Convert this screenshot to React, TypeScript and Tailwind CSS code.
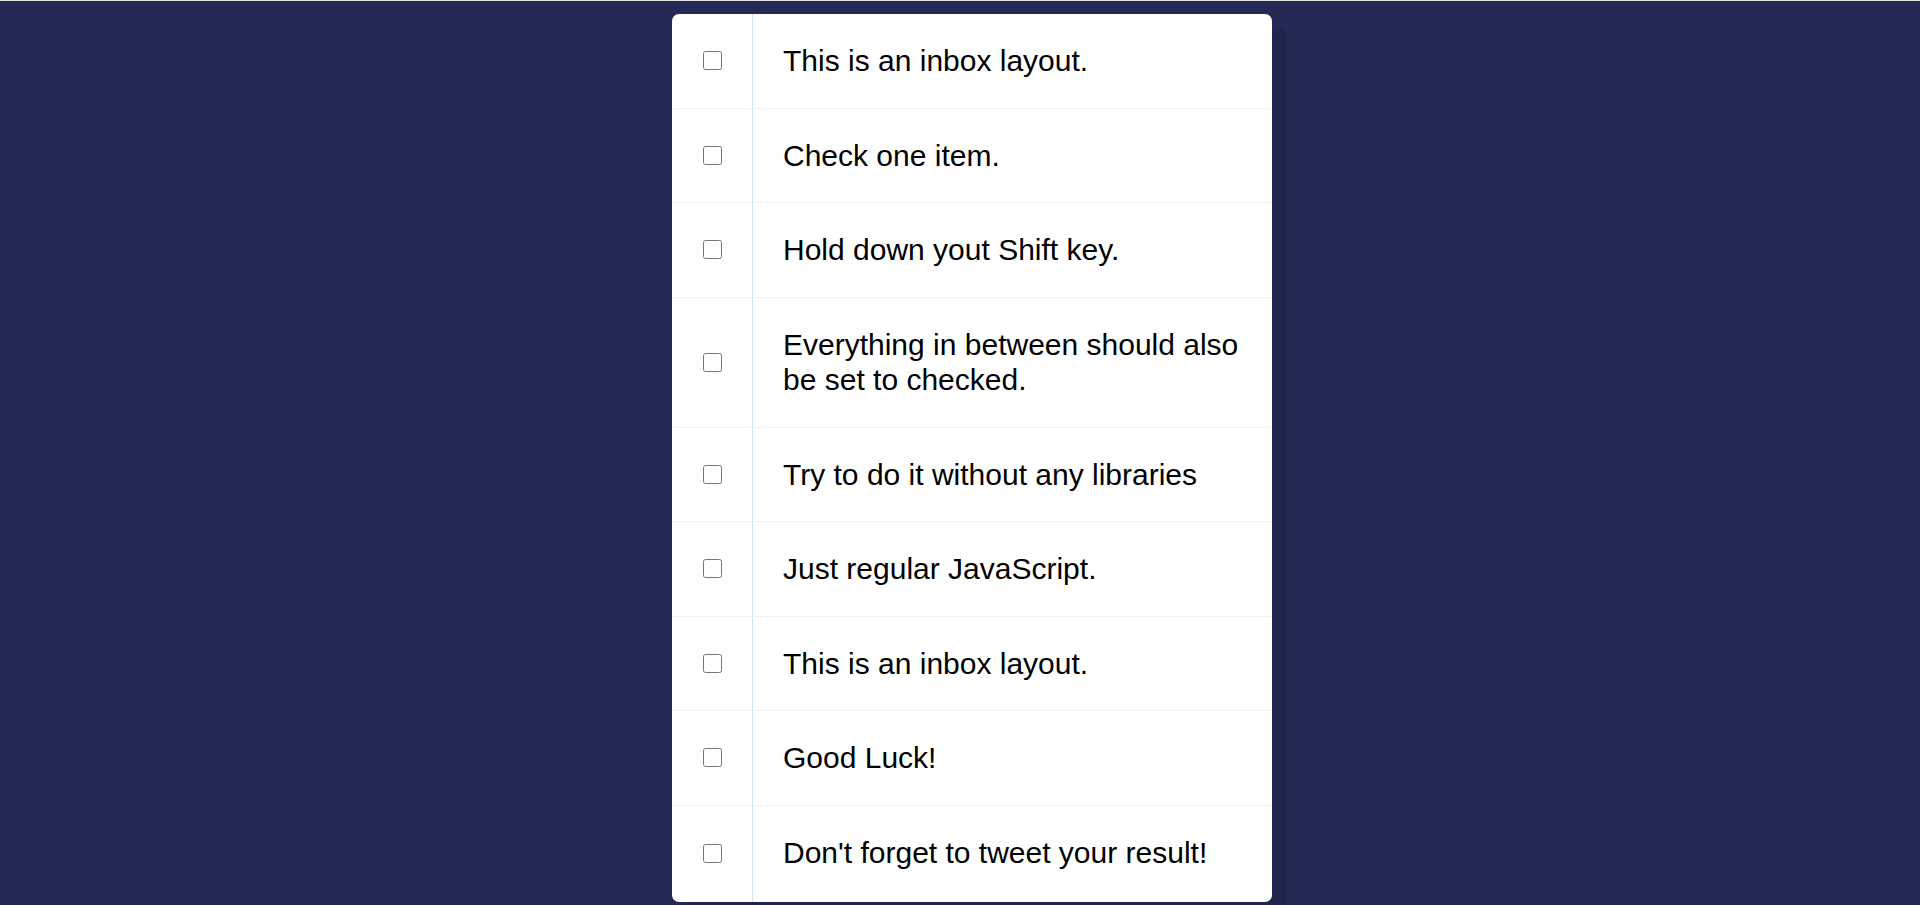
import React from "react";

const items = [
  "This is an inbox layout.",
  "Check one item.",
  "Hold down yout Shift key.",
  "Everything in between should also be set to checked.",
  "Try to do it without any libraries",
  "Just regular JavaScript.",
  "This is an inbox layout.",
  "Good Luck!",
  "Don't forget to tweet your result!",
];

export default function App() {
  return (
    <div className="min-h-[905px] w-full bg-[#252956] border-t border-[#e6e6e6]" style={{ fontFamily: '"Liberation Sans", Arial, sans-serif' }}>
      <div className="pt-[13px] pl-[24px] flex justify-center">
        <div className="w-[600px] bg-white rounded-[7px] shadow-[15px_15px_0_rgba(0,0,0,0.1)] flex flex-col">
          {items.map((t, i) => {
            const last = i === items.length - 1;
            return (
              <div
                key={i}
                className={`flex items-stretch ${last ? "" : "border-b-[1.5px] border-[#f1f1f1]"}`}
              >
                <div className="w-[80px] flex items-center justify-center shrink-0">
                  <input type="checkbox" className="w-[19px] h-[19px] m-0" />
                </div>
                <p
                  className={`flex-1 m-0 px-[30px] pt-[29px] ${last ? "pb-[32px]" : "pb-[29px]"} text-[30px] leading-[35.5px] text-black border-l-[1.5px] border-[#D1E2FF]`}
                >
                  {t}
                </p>
              </div>
            );
          })}
        </div>
      </div>
    </div>
  );
}
